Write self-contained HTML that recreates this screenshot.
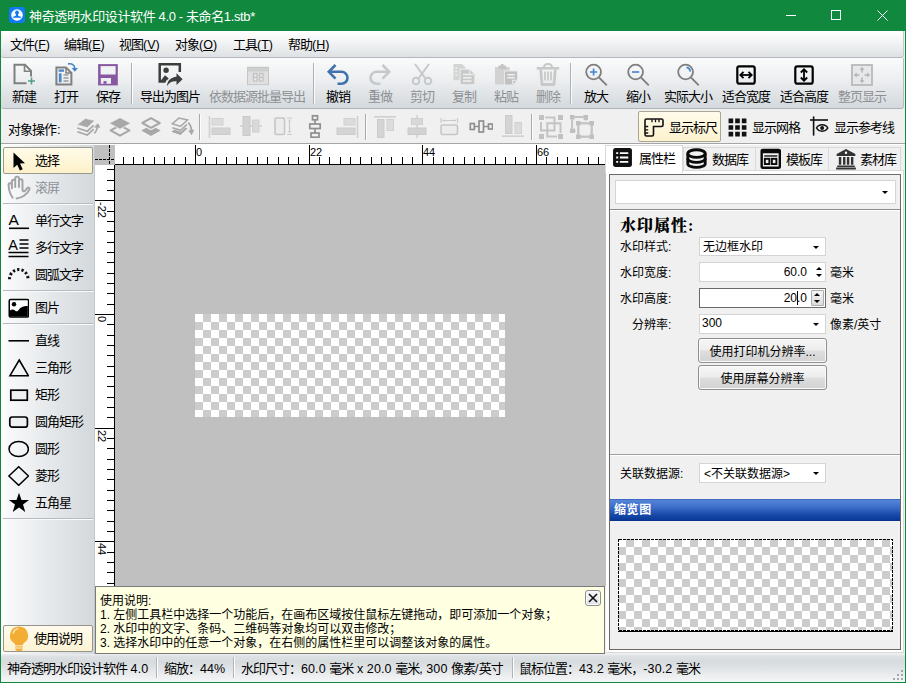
<!DOCTYPE html>
<html lang="zh-CN">
<head>
<meta charset="utf-8">
<title>神奇透明水印设计软件 4.0 - 未命名1.stb*</title>
<style>
*{box-sizing:border-box;margin:0;padding:0}
html,body{width:906px;height:683px;overflow:hidden;background:#10893e}
body{font-family:"Liberation Sans","Noto Sans CJK SC",sans-serif;font-size:12px;color:#000;position:relative;line-height:1}
.abs{position:absolute}
#win{position:absolute;left:0;top:0;width:906px;height:683px;background:#10893e;overflow:hidden}
/* title bar */
#title{left:0;top:0;width:906px;height:31px;background:#10893e;color:#fff}
#title .txt{left:29px;top:9px;font-size:13px;line-height:15px;white-space:nowrap;letter-spacing:-.37px}
/* menu */
#menu{left:1px;top:31px;width:903px;height:27px;border-right:1px solid #c5c9cd;background:linear-gradient(#ffffff 0%,#f4f5f6 38%,#dee1e3 100%);border-bottom:1px solid #b4b7ba;border-radius:0 0 3px 3px}
#menu span{position:absolute;top:6px;line-height:15px;white-space:nowrap;font-size:13px;letter-spacing:-1px}
#menu em{font-style:normal;letter-spacing:0;font-size:12.5px}
/* toolbar 1 */
#tb1{left:1px;top:58px;width:903px;height:51px;border-right:1px solid #b9bec3;background:linear-gradient(#fafbfb 0%,#eceef0 45%,#d4d9dd 100%);border-bottom:1px solid #aeb3b8;border-radius:0 0 3px 3px}
.tbtn{position:absolute;top:-1px;height:51px;text-align:center}
.tbtn svg{position:absolute;left:50%;top:5px;width:24px;height:24px;margin-left:-12px}
.tbtn span{position:absolute;left:-20px;right:-20px;top:32px;line-height:15px;white-space:nowrap;text-align:center;font-size:13px;letter-spacing:-1px}
.tbtn.dis span{color:#8e9093}
.vsep{position:absolute;width:2px;border-left:1px solid #aab0b5;border-right:1px solid #fbfcfc}
/* toolbar 2 */
#tb2{left:1px;top:109px;width:904px;height:36px;background:#f0f0f0;border-bottom:1px solid #fff}
#tb2:after{content:"";position:absolute;left:0;right:0;top:34px;height:1px;background:#a5a5a5}
#tb2 .lbl{left:7px;top:13px;line-height:15px;font-size:13px;letter-spacing:-1px}
.ic2{position:absolute;top:6px;width:24px;height:24px}
.vbtn{position:absolute;top:2px;height:31px;white-space:nowrap}
.vbtn span{position:absolute;top:9px;line-height:15px;font-size:13px;letter-spacing:-1px}
.vbtn svg{position:absolute;top:5px;width:20px;height:20px}
/* left panel */
#left{left:1px;top:145px;width:94px;height:509px;background:linear-gradient(90deg,#ffffff 0%,#f7f8f9 9%,#e7eaec 48%,#d3d8dc 100%);border-right:1px solid #c2c6c9}
.lt{position:absolute;left:2px;width:90px;height:27px}
.lt svg{position:absolute;left:2px;top:2px;width:24px;height:24px}
.lt span{position:absolute;left:32px;top:6px;line-height:15px;white-space:nowrap;font-size:13px;letter-spacing:-1px}
.lt.sel{background:linear-gradient(#fffbe9,#fdf1c9);border:1px solid #9a9a8e;border-radius:2px}
.lt.sel svg{left:1px;top:1px}
.lt.sel span{left:31px;top:5px}
.hsep{position:absolute;left:2px;width:90px;height:2px;border-top:1px solid #b4bac0;border-bottom:1px solid #fafbfb}
/* canvas */
#cv{left:95px;top:145px;width:511px;height:441px;background:#c0c0c0;overflow:hidden}
/* help */
#help{left:95px;top:586px;width:510px;height:68px;background:#ffffe1;border:1px solid #7a7a7a;font-family:"Liberation Sans","Noto Sans CJK SC",sans-serif}
#help div{position:absolute;left:4px;white-space:nowrap;line-height:14px}
/* right */
#right{left:606px;top:145px;width:299px;height:509px;background:#f0f0f0}
.tab{position:absolute;top:2px;height:23px;background:#f0f0f0;border:1px solid #d9d9d9;border-bottom:none}
.tab.act{top:0;height:28px;background:#fff;border-color:#d9d9d9;z-index:2}
.tab svg{position:absolute;left:6px;top:0px;width:21px;height:21px}
.tab.act svg{top:1px;left:6px}
.tab span{position:absolute;left:33px;top:4px;line-height:15px;white-space:nowrap;font-size:13px;letter-spacing:-1px}
.tab.act span{top:5px;left:33px}
#page{left:0;top:25px;width:298px;height:483px;background:#fff;border:1px solid #d9d9d9;border-left:none}
#inner{left:3px;top:29px;width:292px;height:476px;background:#f0f0f0;border:1px solid #696969;font-family:"Liberation Sans","Noto Sans CJK SC",sans-serif}
.combo{position:absolute;background:#fff;border:1px solid #d4d4d4}
.combo i{position:absolute;right:6px;top:50%;margin-top:-1px;width:0;height:0;border-left:3px solid transparent;border-right:3px solid transparent;border-top:3px solid #000}
.combo span{position:absolute;left:3px;top:2px;line-height:14px;white-space:nowrap}
.rl{position:absolute;white-space:nowrap;line-height:14px}
.btn{position:absolute;border:1px solid #8e8f8f;border-radius:3px;background:linear-gradient(#f6f6f6 0%,#ededed 48%,#dedede 52%,#d2d2d2 100%);text-align:center;box-shadow:inset 0 0 0 1px #fbfbfb}
.btn span{display:block;line-height:14px;margin-top:6px}
/* status */
#status{left:1px;top:654px;width:904px;height:28px;background:linear-gradient(#eceef0 0,#dde1e4 9%,#d6dbde 28%,#e3e6e8 58%,#f1f2f3 88%,#f6f7f7 100%)}
#status span{position:absolute;top:7px;line-height:15px;white-space:nowrap;font-size:13px;letter-spacing:-1px;word-spacing:1px}
#status em{font-style:normal;letter-spacing:.1px;font-size:12.5px;word-spacing:0}
#status i{position:absolute;top:3px;width:2px;height:21px;border-left:1px solid #b0b5ba;border-right:1px solid #fff}

.chk{background:repeating-conic-gradient(#ccc 0 25%,#fff 0 50%) 0 0/16px 16px}
.sp{position:absolute;right:0px;top:1px;width:11px;height:16px}
.sp:before,.sp:after{content:"";position:absolute;left:2px;width:0;height:0;border-left:3px solid transparent;border-right:3px solid transparent}
.sp:before{top:3px;border-bottom:3px solid #000}
.sp:after{top:10px;border-top:3px solid #000}
.sp.box{right:1px;top:1px;width:13px;height:16px;background:linear-gradient(#f4f4f4,#dcdcdc);border:1px solid #acacac;border-radius:1px}
.sp.box:before{left:2px;top:2px}.sp.box:after{left:2px;top:9px}
.caret{position:absolute;right:27px;top:2px;width:1px;height:14px;background:#000}
</style>
</head>
<body>
<div id="win">
<div class="abs" style="left:1px;top:31px;width:904px;height:651px;background:#f0f0f0"></div>
<div id="title" class="abs">
<svg class="abs" style="left:9px;top:7px" width="16" height="16" viewBox="0 0 16 16"><rect width="16" height="16" rx="3.2" fill="#0f7bf6"/><circle cx="8" cy="8" r="5.8" fill="#fff"/><path d="M8 3.6a2 2 0 0 1 1.3 3.5c-.5.5-.4 1.5.3 1.9l1.7.6c.6.2.9.7.9 1.2H3.800c0-.5.3-1 .9-1.200l1.700-.6c.7-.4.800-1.400.3-1.900A2 2 0 0 1 8 3.600z" fill="#0f7bf6"/><path d="M4.100 11.600h7.800a5 5 0 0 1-7.800 0z" fill="#0f7bf6" opacity=".0"/></svg>
<div class="txt abs">神奇透明水印设计软件 4.0 - 未命名1.stb*</div>
<svg class="abs" style="left:780px;top:5px" width="120" height="22" viewBox="0 0 120 22" fill="none" stroke="#fff" stroke-width="1"><path d="M6 10.500h10"/><rect x="51.500" y="5.500" width="9" height="9"/><path d="M97.500 5.500l10 10M107.500 5.500l-10 10"/></svg>
</div>

<div id="menu" class="abs">
<span style="left:9px">文件<em>(<u>F</u>)</em></span>
<span style="left:63px">编辑<em>(<u>E</u>)</em></span>
<span style="left:118px">视图<em>(<u>V</u>)</em></span>
<span style="left:174px">对象<em>(<u>O</u>)</em></span>
<span style="left:232px">工具<em>(<u>T</u>)</em></span>
<span style="left:287px">帮助<em>(<u>H</u>)</em></span>
</div>

<div id="tb1" class="abs">
<div class="tbtn" style="left:2px;width:42px"><svg viewBox="0 0 24 24" fill="none"><path d="M14.500 21.300H2.500V2.800h10.500l6 6V14.500" stroke="#808080" stroke-width="2"/><path d="M12.500 2.800v6.500h6.500" stroke="#808080" stroke-width="1.600"/><path d="M19.500 15.500v7M16 19h7" stroke="#52a085" stroke-width="1.600"/></svg><span>新建</span></div>
<div class="tbtn" style="left:44px;width:42px"><svg viewBox="0 0 24 24" fill="none"><path d="M2.400 5.600h9.600l5.400 5.400v11.400H2.400z" stroke="#808080" stroke-width="2"/><path d="M12 5.600V11h5.400" stroke="#808080" stroke-width="1.500"/><path d="M4.600 8.600h5.400" stroke="#4a86c8" stroke-width="2.300"/><path d="M6.200 11.300v9" stroke="#4a86c8" stroke-width="2.700"/><path d="M9.500 13h5M9.500 16h5M9.500 19h5" stroke="#9a9a9a" stroke-width="1.300"/><path d="M14 1.900c4-.6 6.600.8 6.800 4.600" stroke="#4684c8" stroke-width="1.600"/><path d="M17.600 6h6.400l-3.200 3.800z" fill="#4684c8"/></svg><span>打开</span></div>
<div class="tbtn" style="left:86px;width:42px"><svg viewBox="0 0 24 24"><path d="M2.100 2.100h19.700v21.300H2.100z" fill="#8757a1"/><path d="M4.600 4.100h15v8.400h-15z" fill="#f1f2f3"/><path d="M4.800 16H15v5.800H4.800z" fill="#eceef0"/><path d="M7.500 19.100h3v2.700h-3z" fill="#8757a1"/></svg><span>保存</span></div>
<div class="vsep" style="left:130px;top:5px;height:41px"></div>
<div class="tbtn" style="left:134px;width:70px"><svg viewBox="0 0 24 24" style="overflow:visible" fill="none"><path d="M7.500 19.500H1.700V2.200h20.100V10" stroke="#3d3d3d" stroke-width="2.500"/><circle cx="8.100" cy="8.300" r="2.700" fill="#3d3d3d"/><path d="M1.700 20l5.300-6.800 3.800 3.300c-1.700 1.200-2.700 2.300-3.300 3.500z" fill="#3d3d3d"/><path d="M18.500 11.300l6.100 5.900-6.100 5.800v-3.700c-4-.3-7 .7-9.500 4.900.3-5.700 4-8.900 9.500-9.400z" fill="#3d3d3d"/></svg><span>导出为图片</span></div>
<div class="tbtn dis" style="left:204px;width:104px"><svg viewBox="0 0 24 24" fill="none"><rect x="2.500" y="5.400" width="21" height="17.300" fill="#e0e0e0" stroke="#c6c6c6" stroke-width="1"/><rect x="2.500" y="5.400" width="21" height="3.400" fill="#cfcfcf" stroke="#c6c6c6" stroke-width="1"/><path d="M8.500 11.500h3.500v3.800H8.500zM8.500 15.300h3.500v3.800H8.500zM14.500 11.500H18v3.800h-3.500zM14.500 15.300H18v3.800h-3.500z" stroke="#c2c2c2" stroke-width="1.300" stroke-linejoin="round" fill="#e8e8e8"/></svg><span>依数据源批量导出</span></div>
<div class="vsep" style="left:312px;top:5px;height:41px"></div>
<div class="tbtn" style="left:316px;width:42px"><svg viewBox="0 0 24 24" fill="none" stroke="#4172ae" stroke-width="2.600"><path d="M9.500 3L2.800 9.800l6.700 6.800"/><path d="M3 9.800h12.500a6 6 0 0 1 0 12H11.500"/></svg><span>撤销</span></div>
<div class="tbtn dis" style="left:358px;width:42px"><svg viewBox="0 0 24 24" fill="none" stroke="#c6c9cc" stroke-width="2.600"><path d="M14.500 3l6.700 6.800-6.700 6.800"/><path d="M21 9.800H8.500a6 6 0 0 0 0 12h4"/></svg><span>重做</span></div>
<div class="tbtn dis" style="left:400px;width:42px"><svg viewBox="0 0 24 24" fill="none" stroke="#c6c9cc" stroke-width="2"><path d="M5 2l10.500 14.500M19 2L8.500 16.500"/><circle cx="6" cy="19" r="3.300"/><circle cx="18" cy="19" r="3.300"/></svg><span>剪切</span></div>
<div class="tbtn dis" style="left:442px;width:42px"><svg viewBox="0 0 24 24" fill="none"><path d="M1.500 2h8.500l3.700 3.700V18.200H1.500z" fill="#d4d4d4"/><path d="M7.600 6.800h10.700l5 5v11.500H7.600z" fill="#eceef0"/><path d="M8.600 7.800h9.200l4.500 4.500v10H8.600z" fill="#c9c9c9"/><path d="M3.300 6h2M3.300 9.500h2M3.300 13h2" stroke="#f0f1f2" stroke-width="1.500"/><path d="M11 12.500h8.500M11 15.700h8.500M11 18.900h8.500" stroke="#eff0f1" stroke-width="1.500"/><path d="M17.600 8v4.500h4.500" stroke="#ededed" stroke-width="1"/></svg><span>复制</span></div>
<div class="tbtn dis" style="left:484px;width:42px"><svg viewBox="0 0 24 24" fill="none"><path d="M1 5h14.500v17.500H1z" fill="#d2d2d2"/><path d="M4.500 5.500V3.500h2.500V2h2.500v1.500H12v3.500H4.500z" fill="#c4c4c4"/><path d="M10 8.600h14v10l-4.500 4.900H10z" fill="#e6e8ea"/><path d="M11 9.600h12v8.500l-4 4.400h-8z" fill="#c1c1c1"/><path d="M13.300 12.800h7.500M13.300 15.800h7.500" stroke="#f0f0f0" stroke-width="1.400"/><path d="M18.800 22v-3.800h3.800" stroke="#f0f0f0" stroke-width="1.100"/></svg><span>粘贴</span></div>
<div class="tbtn dis" style="left:526px;width:42px"><svg viewBox="0 0 24 24" fill="none"><path d="M.700 6.300h22.500" stroke="#c8c8c8" stroke-width="2.600"/><path d="M8 5.500c0-2.200 1.200-3.500 4-3.500s4 1.300 4 3.500" stroke="#c8c8c8" stroke-width="2"/><path d="M4.700 7.500l1.300 15h12l1.300-15" stroke="#c8c8c8" stroke-width="2.800" stroke-linejoin="round"/><path d="M9 9.500v9M12 9.500v9M15 9.500v9" stroke="#cdcdcd" stroke-width="2"/></svg><span>删除</span></div>
<div class="vsep" style="left:569px;top:5px;height:41px"></div>
<div class="tbtn" style="left:574px;width:42px"><svg viewBox="0 0 24 24" fill="none"><circle cx="9.600" cy="10" r="7.400" stroke="#7f7f7f" stroke-width="1.800"/><path d="M15 15.500l7.800 7.800" stroke="#7f7f7f" stroke-width="1.800"/><path d="M6 10h7.200M9.600 6.400v7.200" stroke="#4685d0" stroke-width="1.650"/></svg><span>放大</span></div>
<div class="tbtn" style="left:616px;width:42px"><svg viewBox="0 0 24 24" fill="none"><circle cx="9.600" cy="10" r="7.400" stroke="#7f7f7f" stroke-width="1.800"/><path d="M15 15.500l7.800 7.800" stroke="#7f7f7f" stroke-width="1.800"/><path d="M6 10h7.200" stroke="#4685d0" stroke-width="1.650"/></svg><span>缩小</span></div>
<div class="tbtn" style="left:658px;width:58px"><svg viewBox="0 0 24 24" fill="none"><circle cx="9.600" cy="10" r="7.400" stroke="#7f7f7f" stroke-width="1.800"/><path d="M15 15.500l7.800 7.800" stroke="#7f7f7f" stroke-width="1.800"/><path d="M10.500 5.400a4.700 4.700 0 0 1 3.800 4.200" stroke="#4685d0" stroke-width="1.650"/></svg><span>实际大小</span></div>
<div class="tbtn" style="left:716px;width:58px"><svg viewBox="0 0 24 24" fill="none"><rect x="3.300" y="4.300" width="17.400" height="17.400" rx="2" stroke="#000" stroke-width="2.200"/><path d="M6.500 13h11" stroke="#000" stroke-width="1.800"/><path d="M9.500 9.800L6.300 13l3.200 3.200M14.500 9.800l3.200 3.200-3.200 3.200" stroke="#000" stroke-width="1.800"/></svg><span>适合宽度</span></div>
<div class="tbtn" style="left:774px;width:58px"><svg viewBox="0 0 24 24" fill="none"><rect x="3.300" y="4.300" width="17.400" height="17.400" rx="2" stroke="#000" stroke-width="2.200"/><path d="M12 7.500v11" stroke="#000" stroke-width="1.800"/><path d="M8.800 10.500L12 7.300l3.200 3.200M8.800 15.500l3.200 3.200 3.200-3.200" stroke="#000" stroke-width="1.800"/></svg><span>适合高度</span></div>
<div class="tbtn dis" style="left:832px;width:58px"><svg viewBox="0 0 24 24" fill="none"><rect x="2" y="3" width="20" height="20" fill="#e6e8ea" stroke="#bcbcbc" stroke-width="1.900"/><path d="M12 6v4.500M12 15.500v4.500M5 13h4.500M14.500 13h4.500" stroke="#b4b4b4" stroke-width="1.500"/><path d="M9.600 7.800L12 4.800l2.400 3zM9.600 18.200l2.400 3 2.400-3zM6.800 10.600l-3 2.400 3 2.400zM17.200 10.600l3 2.400-3 2.400z" fill="#b4b4b4"/></svg><span>整页显示</span></div>
</div>

<div id="tb2" class="abs">
<div class="lbl abs">对象操作<em style="font-style:normal;letter-spacing:0;margin-left:1px">:</em></div>
<svg class="ic2" style="left:75px;top:4.700px" viewBox="0 0 24 24" fill="none"><path d="M1.300 17.800l10 3.200 6.400-5.800M1.300 14l10 3.200 6.400-5.800" stroke="#a8a8a8" stroke-width="1.700"/><path d="M1.100 10.800L9.200 4.500l9.600 2.100-7.500 7z" fill="#a8a8a8" stroke="#f0f0f0" stroke-width=".6"/><path d="M18.300 19.500c2-2 3-4.500 3.200-8" stroke="#a8a8a8" stroke-width="1.700"/><path d="M17.800 13.600l4.200-4.300 2.600 4.500z" fill="#a8a8a8"/></svg>
<svg class="ic2" style="left:107px;top:4.700px" viewBox="0 0 24 24" fill="none"><path d="M2.600 16.400L12 11.400l9.400 5-9.400 5.200z" stroke="#a8a8a8" stroke-width="2.100" stroke-linejoin="round"/><path d="M.3 9.200L12 3l11.700 6.200L12 15.600z" fill="#f0f0f0"/><path d="M1.900 9.200L12 3.900l10.100 5.300L12 14.700z" fill="#a8a8a8"/></svg>
<svg class="ic2" style="left:138px;top:4.700px" viewBox="0 0 24 24" fill="none"><path d="M2.300 16.600L12 11.300l9.700 5.300-9.700 5.300z" fill="#a8a8a8"/><path d="M3.300 9L12 4.200 20.700 9 12 13.800z" fill="#f0f0f0" stroke="#f0f0f0" stroke-width="4.500" stroke-linejoin="round"/><path d="M3.300 9L12 4.200 20.700 9 12 13.800z" stroke="#a8a8a8" stroke-width="2.100" stroke-linejoin="round"/></svg>
<svg class="ic2" style="left:169px;top:4.700px" viewBox="0 0 24 24" fill="none"><path d="M1.500 17.800l9 2.900 7-6.500-2-.6-5 4.500-6.500-2z" fill="#a8a8a8"/><path d="M1.500 17.800l9 2.900 7-6.500-8-2.300z" fill="#a8a8a8"/><path d="M2.300 13.700l8.300 2.600 6.400-5.900-7.800-2.200z" fill="#f0f0f0" stroke="#f0f0f0" stroke-width="2.600"/><path d="M2.300 13.700l8.300 2.600 6.400-5.900" stroke="#a8a8a8" stroke-width="1.500"/><path d="M2.300 9.800l8.300 2.600 6.900-6.400-8.600-1.900z" fill="#f0f0f0" stroke="#a8a8a8" stroke-width="1.500"/><path d="M18.300 8.500c2 2 3 4.500 3.200 8" stroke="#a8a8a8" stroke-width="1.700"/><path d="M18.300 16.500l6-1-2.700 5.800z" fill="#a8a8a8"/></svg>
<div class="vsep" style="left:198px;top:5px;height:26px;border-left-color:#a9a9a9"></div>
<svg class="ic2" style="left:206px;top:5.300px" viewBox="0 0 24 24" fill="none"><path d="M2.500 2v22" stroke="#cfcfcf" stroke-width="1.600"/><rect x="5" y="4.500" width="11" height="6.500" fill="#dcdcdc" stroke="#d0d0d0"/><rect x="5" y="14" width="18" height="6.500" fill="#d4d4d4" stroke="#cccccc"/></svg>
<svg class="ic2" style="left:238px;top:5.300px" viewBox="0 0 24 24" fill="none"><path d="M1 12h22" stroke="#cdcdcd" stroke-width="1.400"/><rect x="4" y="2.500" width="7" height="19" fill="#d2d2d2" stroke="#c9c9c9"/><rect x="13.500" y="6" width="6.500" height="12" fill="#d9d9d9" stroke="#cfcfcf"/></svg>
<svg class="ic2" style="left:270px;top:5.300px" viewBox="0 0 24 24" fill="none"><rect x="4" y="4" width="9.500" height="16.500" rx="1.500" fill="#ececec" stroke="#c6c6c6" stroke-width="1.600"/><path d="M16 4h5M16 20.500h5M18.500 5.500v13.500" stroke="#cacaca" stroke-width="1.200"/><path d="M17 7.500l1.500-2 1.500 2zM17 17l1.500 2 1.500-2z" fill="#cacaca"/></svg>
<svg class="ic2" style="left:302px;top:5.300px" viewBox="0 0 24 24" fill="none" stroke="#8f8f8f" stroke-width="1.700"><rect x="9.500" y="1.800" width="5" height="4"/><path d="M12 6v4M12 14v5"/><rect x="6.800" y="10" width="10.400" height="4.500"/><rect x="8" y="19" width="8" height="4.200"/></svg>
<svg class="ic2" style="left:334.500px;top:5.300px" viewBox="0 0 24 24" fill="none"><path d="M21.500 2v22" stroke="#cfcfcf" stroke-width="1.600"/><rect x="8" y="4.500" width="11" height="6.500" fill="#dcdcdc" stroke="#d0d0d0"/><rect x="1" y="14" width="18" height="6.500" fill="#d4d4d4" stroke="#cccccc"/></svg>
<div class="vsep" style="left:364px;top:5px;height:26px;border-left-color:#a9a9a9"></div>
<svg class="ic2" style="left:372px;top:5.300px" viewBox="0 0 24 24" fill="none"><path d="M1 2.800h22" stroke="#cfcfcf" stroke-width="1.600"/><rect x="4.500" y="5.500" width="6.500" height="18" fill="#d4d4d4" stroke="#cccccc"/><rect x="14" y="5.500" width="6.500" height="11" fill="#dcdcdc" stroke="#d0d0d0"/></svg>
<svg class="ic2" style="left:404px;top:5.300px" viewBox="0 0 24 24" fill="none"><path d="M12 1v23" stroke="#cdcdcd" stroke-width="1.400"/><rect x="6.500" y="4.500" width="11" height="6" fill="#d9d9d9" stroke="#cfcfcf"/><rect x="3" y="14" width="18" height="6.500" fill="#d2d2d2" stroke="#c9c9c9"/></svg>
<svg class="ic2" style="left:436px;top:5.300px" viewBox="0 0 24 24" fill="none"><rect x="4" y="11" width="16.500" height="9.500" rx="1.500" fill="#ececec" stroke="#c6c6c6" stroke-width="1.600"/><path d="M4 4v5M20.500 4v5M5.500 6.500h13.500" stroke="#cacaca" stroke-width="1.200"/><path d="M7.500 5l-2 1.500 2 1.500zM17 5l2 1.500-2 1.500z" fill="#cacaca"/></svg>
<svg class="ic2" style="left:468px;top:5.300px" viewBox="0 0 24 24" fill="none" stroke="#8f8f8f" stroke-width="1.700"><rect x="1.300" y="9.500" width="4" height="6"/><path d="M5.500 12.500h4.500M14.500 12.500h5"/><rect x="10" y="7" width="4.500" height="11"/><rect x="19.500" y="10" width="4" height="5"/></svg>
<svg class="ic2" style="left:500px;top:5.300px" viewBox="0 0 24 24" fill="none"><path d="M1 22.200h22" stroke="#cfcfcf" stroke-width="1.600"/><rect x="4.500" y="1.500" width="6.500" height="18" fill="#d4d4d4" stroke="#cccccc"/><rect x="14" y="8.500" width="6.500" height="11" fill="#dcdcdc" stroke="#d0d0d0"/></svg>
<div class="vsep" style="left:530px;top:5px;height:26px;border-left-color:#a9a9a9"></div>
<svg class="ic2" style="left:537px;top:5px;overflow:visible" viewBox="0 0 24 24" fill="none"><path d="M1 1h5v5H1zM20 1h5v5h-5zM1 20h5v5H1zM20 20h5v5h-5z" fill="#c1c1c1"/><path d="M7.300 3.500h9.200V16.500H3V8" stroke="#c4c4c4" stroke-width="2"/><path d="M22.500 19V9.300H9.300V22.500H19" stroke="#c4c4c4" stroke-width="2"/></svg>
<svg class="ic2" style="left:569px;top:5px;overflow:visible" viewBox="0 0 24 24" fill="none"><path d="M4.600 3.100h9M2.100 5.500v9" stroke="#c3c3c3" stroke-width="2"/><rect x="8.300" y="9.300" width="13.400" height="13.400" stroke="#c4c4c4" stroke-width="2.300"/><path d="M0 1h4.600v4.500H0zM13.400 1H18v4.500l-2.300 1.200-2.300-1.200zM0 14.400h4.600l1.200 2.300-1.200 2.300H0zM6 7h4.600v4.500H6zM19.400 7H24v4.500h-4.600zM6 20.400h4.600V25H6zM19.400 20.400H24V25h-4.600z" fill="#c0c0c0"/></svg>
<div class="vbtn" style="left:637px;width:83px;background:linear-gradient(#fffbea,#fdf2cf);border:1px solid #a9a793;border-radius:2px"><svg style="left:5px;top:5px" viewBox="0 0 20 20" fill="none" stroke="#111" stroke-width="1.600"><path d="M1 3.500A1.500 1.500 0 0 1 2.500 2H17.500A1.500 1.500 0 0 1 19 3.500V8A1.500 1.500 0 0 1 17.500 9.500H9.500V17.500A1.500 1.500 0 0 1 8 19H2.500A1.500 1.500 0 0 1 1 17.500z"/><path d="M8 2.200v3M11.500 2.200v3M15 2.200v3M1.200 9.500h3M1.200 12.800h3M1.200 16h3" stroke-width="1.300"/></svg><span style="left:30px;top:8px">显示标尺</span></div>
<div class="vbtn" style="left:721px;width:82px"><svg style="left:4.500px;top:5.500px;width:21px;height:21px" viewBox="0 0 20 20" fill="#111"><path d="M1.500 1.500h4.400v4.400H1.500zM7.800 1.500h4.400v4.400H7.800zM14.100 1.500h4.400v4.400h-4.400zM1.500 7.800h4.400v4.400H1.500zM7.800 7.800h4.400v4.400H7.800zM14.100 7.800h4.400v4.400h-4.400zM1.500 14.100h4.400v4.400H1.500zM7.800 14.100h4.400v4.400H7.800zM14.100 14.100h4.400v4.400h-4.400z"/></svg><span style="left:30px;top:9px">显示网格</span></div>
<div class="vbtn" style="left:803px;width:96px"><svg style="left:5px;top:5px" viewBox="0 0 20 20" fill="none" stroke="#111"><path d="M1 4h18" stroke-width="1.600"/><path d="M4.600 .4v19.200" stroke-width="1.600"/><path d="M7.500 12c2.300-4.200 9-4.200 11.300 0-2.300 4.200-9 4.200-11.300 0z" stroke-width="1.500"/><circle cx="13.100" cy="12" r="2" fill="#111" stroke="none"/></svg><span style="left:30px;top:9px">显示参考线</span></div>
</div>

<div id="left" class="abs">
<div class="lt sel" style="top:2px"><svg viewBox="0 0 24 24"><path d="M8.500 3.500v15.500l3.700-3.300 2.700 5.800 2.800-1.300-2.700-5.700 5-.3z" fill="#000"/></svg><span>选择</span></div>
<div class="lt" style="top:29px"><svg viewBox="0 0 24 24" style="overflow:visible" fill="none" stroke="#a3a3a3" stroke-width="1.950" stroke-linecap="round" stroke-linejoin="round"><path d="M7.600 21.600C5 18 3.800 13 3.600 9.200a1.650 1.650 0 0 1 3.300-.5V12.300M6.900 8.800V5.300a1.650 1.650 0 0 1 3.300 0V11M10.200 5.500V2.500a1.900 1.900 0 0 1 3.800 0V11M14 5a1.750 1.750 0 0 1 3.500 0V13.500c0 2 1.500 2.300 2.600 1.200l2.200-2.600a1.300 1.300 0 0 1 2.200 1.300C22.500 18 17 22 11.600 22.500"/></svg><span style="color:#8c9298">滚屏</span></div>
<div class="hsep" style="top:58px"></div>
<div class="lt" style="top:62px"><svg viewBox="0 0 24 24"><text x="3.500" y="15.800" font-family="Liberation Sans, sans-serif" font-size="15.500" fill="#000">A</text><path d="M4 19.300h20" stroke="#000" stroke-width="1.600"/></svg><span>单行文字</span></div>
<div class="lt" style="top:89px"><svg viewBox="0 0 24 24"><text x="3.200" y="13.500" font-family="Liberation Sans, sans-serif" font-size="14.500" fill="#000">A</text><path d="M14.500 4h9M14.500 8h9M14.500 12h9M3.500 16.500h20M3.500 20.500h20" stroke="#000" stroke-width="1.500"/></svg><span>多行文字</span></div>
<div class="lt" style="top:116px"><svg viewBox="0 0 24 24" style="overflow:visible" fill="none" stroke="#111" stroke-width="3" stroke-dasharray="2.300 2.100"><path d="M4.500 16.300A9.300 9.800 0 0 1 23.100 16.300"/></svg><span>圆弧文字</span></div>
<div class="hsep" style="top:145px"></div>
<div class="lt" style="top:149px"><svg viewBox="0 0 24 24"><rect x="3.500" y="2.800" width="20.800" height="19" rx="2" fill="#000"/><rect x="5" y="4.300" width="17.800" height="16" rx=".5" fill="#fff"/><circle cx="9" cy="8.300" r="2.200" fill="#000"/><path d="M5 14.500c2-1.500 3.500-1.500 5 0s2.500 1 4-1 4-3.500 8.800-3.500V20.500H5z" fill="#000"/></svg><span>图片</span></div>
<div class="hsep" style="top:178px"></div>
<div class="lt" style="top:182px"><svg style="top:.4px" viewBox="0 0 24 24"><path d="M3.500 13.800h21" stroke="#000" stroke-width="1.600"/></svg><span>直线</span></div>
<div class="lt" style="top:209px"><svg style="top:.4px" viewBox="0 0 24 24" fill="none"><path d="M14.200 6l9.200 15.700H5z" stroke="#000" stroke-width="1.600"/></svg><span>三角形</span></div>
<div class="lt" style="top:236px"><svg style="top:.4px" viewBox="0 0 24 24" fill="none"><rect x="5.800" y="9.200" width="16.500" height="10" stroke="#000" stroke-width="1.700" fill="#eef0f2"/></svg><span>矩形</span></div>
<div class="lt" style="top:263px"><svg style="top:.4px" viewBox="0 0 24 24" fill="none"><rect x="4.800" y="9" width="17.600" height="10.200" rx="2.500" stroke="#000" stroke-width="1.700" fill="#eef0f2"/></svg><span>圆角矩形</span></div>
<div class="lt" style="top:290px"><svg style="top:.4px" viewBox="0 0 24 24" fill="none"><ellipse cx="13.700" cy="14" rx="9.700" ry="7.500" stroke="#000" stroke-width="1.500"/></svg><span>圆形</span></div>
<div class="lt" style="top:317px"><svg style="top:.4px" viewBox="0 0 24 24" fill="none"><path d="M13.700 4.700l9.800 9.300-9.800 9.300L3.900 14z" stroke="#000" stroke-width="1.500"/></svg><span>菱形</span></div>
<div class="lt" style="top:344px"><svg style="top:.4px" viewBox="0 0 24 24"><path d="M14 3.800l2.500 7.200h7.600l-6.100 4.600 2.300 7.400L14 18.500 7.700 23l2.300-7.400L3.900 11h7.600z" fill="#000"/></svg><span>五角星</span></div>
<div class="hsep" style="top:373px"></div>
<div class="lt sel" style="top:480px;background:linear-gradient(#fffbec,#fdf3d3);border-color:#96958c"><svg viewBox="0 0 24 24" style="left:3.200px;top:-1px;overflow:visible"><path d="M12 1.600a9 9 0 0 1 5 16.500c-.8.600-1.200 1.300-1.300 2.200H8.300c-.1-.9-.5-1.600-1.300-2.200A9 9 0 0 1 12 1.600z" fill="#f3ad35"/><path d="M6.300 8c.6-2.200 2.300-3.800 4.500-4.300" stroke="#ffe9bd" stroke-width="1.300" fill="none" stroke-linecap="round"/><path d="M8.300 21.300h7.400v1.200H8.300zM8.300 23.400h7.400v.6c0 1.300-1.500 2.200-3.700 2.200s-3.700-.9-3.700-2.200z" fill="#f3ad35"/></svg><span style="left:30px">使用说明</span></div>
</div>

<div id="cv" class="abs">
<div class="abs" style="left:20px;top:0;width:491px;height:20px;background:#fff"></div>
<div class="abs" style="left:0;top:20px;width:20px;height:421px;background:#fff"></div>
<svg class="abs" style="left:0;top:0" width="511" height="441" viewBox="0 0 511 441" fill="none" stroke="#000" stroke-width="1" shape-rendering="crispEdges">
<path d="M28.5 12V19M38.5 12V19M48.5 12V19M59.5 12V19M69.5 12V19M79.5 12V19M90.5 12V19M100.5 0V19M110.5 12V19M121.5 12V19M131.5 12V19M141.5 12V19M152.5 12V19M162.5 12V19M172.5 12V19M183.5 12V19M193.5 12V19M203.5 12V19M214.5 0V19M224.5 12V19M234.5 12V19M245.5 12V19M255.5 12V19M265.5 12V19M276.5 12V19M286.5 12V19M296.5 12V19M307.5 12V19M317.5 12V19M327.5 0V19M338.5 12V19M348.5 12V19M358.5 12V19M369.5 12V19M379.5 12V19M389.5 12V19M400.5 12V19M410.5 12V19M420.5 12V19M431.5 12V19M441.5 0V19M451.5 12V19M462.5 12V19M472.5 12V19M482.5 12V19M493.5 12V19M503.5 12V19"/>
<path d="M12 24.5H19M12 35.5H19M12 45.5H19M0 55.5H19M12 66.5H19M12 76.5H19M12 86.5H19M12 97.5H19M12 107.5H19M12 117.5H19M12 128.5H19M12 138.5H19M12 148.5H19M12 159.5H19M0 169.5H19M12 179.5H19M12 190.5H19M12 200.5H19M12 210.5H19M12 221.5H19M12 231.5H19M12 241.5H19M12 252.5H19M12 262.5H19M12 272.5H19M0 283.5H19M12 293.5H19M12 303.5H19M12 314.5H19M12 324.5H19M12 334.5H19M12 345.5H19M12 355.5H19M12 365.5H19M12 376.5H19M12 386.5H19M0 396.5H19M12 407.5H19M12 417.5H19M12 427.5H19M12 438.5H19"/>
<path d="M19.500 19.500H511M19.500 19.500V441"/>
<path d="M0 14.500H20M14.500 0V20" stroke-dasharray="3 1"/>
</svg>
<div class="rl" style="left:101px;top:1px;font-size:11px;line-height:12px">0</div>
<div class="rl" style="left:215px;top:1px;font-size:11px;line-height:12px">22</div>
<div class="rl" style="left:328px;top:1px;font-size:11px;line-height:12px">44</div>
<div class="rl" style="left:442px;top:1px;font-size:11px;line-height:12px">66</div>
<div class="rl" style="left:0px;top:57px;font-size:11px;line-height:12px;width:12px;height:30px"><span style="position:absolute;left:13px;top:0;transform-origin:0 0;transform:rotate(90deg);white-space:nowrap">-22</span></div>
<div class="rl" style="left:0px;top:171px;font-size:11px;line-height:12px;width:12px;height:30px"><span style="position:absolute;left:13px;top:0;transform-origin:0 0;transform:rotate(90deg);white-space:nowrap">0</span></div>
<div class="rl" style="left:0px;top:285px;font-size:11px;line-height:12px;width:12px;height:30px"><span style="position:absolute;left:13px;top:0;transform-origin:0 0;transform:rotate(90deg);white-space:nowrap">22</span></div>
<div class="rl" style="left:0px;top:398px;font-size:11px;line-height:12px;width:12px;height:30px"><span style="position:absolute;left:13px;top:0;transform-origin:0 0;transform:rotate(90deg);white-space:nowrap">44</span></div>
<div class="abs chk" style="left:100px;top:169px;width:310px;height:103px"></div>
</div>
<div id="help" class="abs">
<div style="top:7px">使用说明:</div>
<div style="top:21px">1. 左侧工具栏中选择一个功能后，在画布区域按住鼠标左键拖动，即可添加一个对象；</div>
<div style="top:35px">2. 水印中的文字、条码、二维码等对象均可以双击修改；</div>
<div style="top:49px">3. 选择水印中的任意一个对象，在右侧的属性栏里可以调整该对象的属性。</div>
<div class="btn" style="left:489px;top:3px;width:16px;height:16px;border-radius:3px;background:linear-gradient(#f7f7f7,#dfe3e7)"><svg width="14" height="14" viewBox="0 0 14 14" style="position:absolute;left:0;top:0"><path d="M3 3l8 8M11 3l-8 8" stroke="#111" stroke-width="1.600"/></svg></div>
</div>

<div id="right" class="abs">
<div id="page" class="abs"></div>
<div class="tab act" style="left:-1px;width:78px"><svg viewBox="0 0 20 20"><rect x="1" y="1" width="18" height="18" rx="2.500" fill="#111"/><path d="M7.500 5.800h8M7.500 10h8M7.500 14.200h8" stroke="#fff" stroke-width="1.700"/><path d="M4 4.900h1.900v1.800H4zM4 9.100h1.900v1.800H4zM4 13.300h1.900v1.800H4z" fill="#fff"/></svg><span>属性栏</span></div>
<div class="tab" style="left:77px;width:73px"><svg style="left:2px" viewBox="0 0 20 20" fill="none" stroke="#0a0a0a" stroke-width="2.700"><ellipse cx="10" cy="5.300" rx="8.300" ry="3.600" fill="#fff" fill-opacity=".0"/><path d="M1.700 5.300v9.600c0 2 3.700 3.600 8.300 3.600s8.300-1.600 8.300-3.600V5.300"/><path d="M1.700 10.100c0 2 3.700 3.600 8.300 3.600s8.300-1.600 8.300-3.600"/></svg><span style="left:28px">数据库</span></div>
<div class="tab" style="left:149px;width:74px"><svg style="left:4px" viewBox="0 0 20 20" fill="none" stroke="#0a0a0a"><rect x="1.600" y="1.800" width="17.300" height="17" rx="1" stroke-width="2.300"/><path d="M1.600 3.800h17.300" stroke-width="2.400"/><path d="M4 7.600h12.500" stroke-width="1.300"/><rect x="4.600" y="10.300" width="4.300" height="5" stroke-width="1.800"/><rect x="11.300" y="10.300" width="4.300" height="5" stroke-width="1.800"/></svg><span style="left:30px">模板库</span></div>
<div class="tab" style="left:222px;width:73px"><svg style="left:6px;width:22px;height:22px" viewBox="0 0 20 20" fill="#333"><path d="M10 .8l8.500 4.700v1.700h-17V5.500z"/><circle cx="10" cy="4.300" r="1.100" fill="#fff"/><path d="M3.500 8.200h2.200v7H3.500zM7.300 8.200h2.200v7H7.300zM10.800 8.200H13v7h-2.200zM14.500 8.200h2.200v7h-2.200z"/><path d="M2 15.800h16v1.400H2zM1 17.800h18v1.700H1z"/></svg><span style="left:31px">素材库</span></div>
<div id="inner" class="abs">
<div class="combo" style="left:5px;top:5px;width:281px;height:24px"><i style="right:7px"></i></div>
<div class="abs" style="left:0;top:34px;width:290px;height:2px;border-top:1px solid #8c8c8c;border-bottom:1px solid #fff"></div>
<div class="rl" style="left:10px;top:42px;font:900 16px/18px 'Liberation Serif','Noto Serif CJK SC',serif;letter-spacing:1px">水印属性:</div>
<div class="rl" style="left:10px;top:65px">水印样式:</div>
<div class="combo" style="left:89px;top:62px;width:127px;height:19px"><span>无边框水印</span><i></i></div>
<div class="rl" style="left:10px;top:91px">水印宽度:</div>
<div class="combo" style="left:89px;top:87px;width:127px;height:20px"><span style="left:auto;right:18px;top:2px">60.0</span><b class="sp"></b></div>
<div class="rl" style="left:220px;top:91px">毫米</div>
<div class="rl" style="left:10px;top:117px">水印高度:</div>
<div class="combo" style="left:89px;top:113px;width:127px;height:20px;border-color:#6a6a6a"><span style="left:auto;right:18px;top:2px">20.0</span><em class="caret"></em><b class="sp box"></b></div>
<div class="rl" style="left:220px;top:117px">毫米</div>
<div class="rl" style="left:22px;top:143px">分辨率:</div>
<div class="combo" style="left:89px;top:139px;width:127px;height:20px"><span style="left:2px;top:1px">300</span><i></i></div>
<div class="rl" style="left:220px;top:143px">像素/英寸</div>
<div class="btn" style="left:88px;top:163px;width:129px;height:25px"><span>使用打印机分辨率...</span></div>
<div class="btn" style="left:88px;top:190px;width:129px;height:25px"><span>使用屏幕分辨率</span></div>
<div class="abs" style="left:0;top:279px;width:290px;height:2px;border-top:1px solid #a0a0a0;border-bottom:1px solid #fff"></div>
<div class="rl" style="left:10px;top:292px">关联数据源:</div>
<div class="combo" style="left:89px;top:288px;width:127px;height:20px"><span style="left:4px;top:3px">&lt;不关联数据源&gt;</span><i></i></div>
<div class="abs" style="left:0;top:324px;width:290px;height:22px;background:linear-gradient(#3059b5 0,#5384d8 6%,#3e70cb 35%,#1a4bab 70%,#0b3a98 94%,#062f86 100%)"></div>
<div class="rl" style="left:4px;top:329px;color:#fff;font-weight:bold;font-family:'Liberation Sans','Noto Sans CJK SC',sans-serif;line-height:13px;letter-spacing:.6px">缩览图</div>
<div class="abs chk" style="left:8px;top:364px;width:275px;height:92px;border-bottom:0"></div><div class="abs" style="left:8px;top:456px;width:275px;height:1px;background:#000"></div>
<svg class="abs" style="left:8px;top:364px" width="275" height="92" fill="none" shape-rendering="crispEdges"><rect x=".5" y=".5" width="274" height="91" stroke="#000" stroke-dasharray="3 1"/></svg>
</div>
</div>

<div id="status" class="abs">
<span style="left:6px">神奇透明水印设计软件<em> 4.0</em></span><i style="left:155px"></i>
<span style="left:163px">缩放：<em>44%</em></span><i style="left:232px"></i>
<span style="left:240px">水印尺寸：<em>60.0 </em>毫米<em> x 20.0 </em>毫米<em>, 300 </em>像素<em>/</em>英寸</span><i style="left:511px"></i>
<span style="left:518px">鼠标位置：<em>43.2 </em>毫米，<em>-30.2 </em>毫米</span>
<svg class="abs" style="left:891px;top:16px" width="12" height="12" fill="#a4a9ad"><path d="M9 0h2v2H9zM5 4h2v2H5zM9 4h2v2H9zM1 8h2v2H1zM5 8h2v2H5zM9 8h2v2H9z"/></svg>
</div>

</div>
</body>
</html>
